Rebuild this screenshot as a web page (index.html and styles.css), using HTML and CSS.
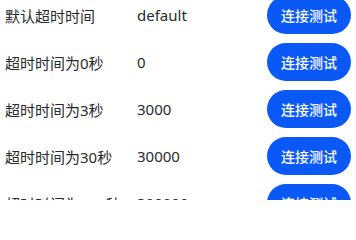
FILE: index.html
```html
<!DOCTYPE html>
<html lang="zh">
<head>
<meta charset="utf-8">
<link rel="stylesheet" href="styles.css">
</head>
<body>
<div class="list">
  <div class="row"><span class="label">默认超时时间</span><span class="value">default</span><button class="btn">连接测试</button></div>
  <div class="row"><span class="label">超时时间为0秒</span><span class="value">0</span><button class="btn">连接测试</button></div>
  <div class="row"><span class="label">超时时间为3秒</span><span class="value">3000</span><button class="btn">连接测试</button></div>
  <div class="row"><span class="label">超时时间为30秒</span><span class="value">30000</span><button class="btn">连接测试</button></div>
  <div class="row"><span class="label">超时时间为300秒</span><span class="value">300000</span><button class="btn">连接测试</button></div>
</div>
</body>
</html>
```
FILE: styles.css
```css
html, body {
  margin: 0;
  padding: 0;
  background: #ffffff;
}
html {
  height: 200px;
  overflow: hidden;
}
body {
  width: 356px;
  height: 200px;
  overflow: hidden;
  font-family: "Noto Sans", "Noto Sans CJK SC", sans-serif;
}
.list {
  display: flex;
  flex-direction: column;
  gap: 9px;
  margin-top: -4px;
  padding: 0 5px;
}
.row {
  display: flex;
  align-items: center;
  height: 38px;
}
.label {
  width: 132px;
  font-size: 15px;
  color: #2a2a2a;
  white-space: nowrap;
}
.value {
  flex: 1;
  font-size: 15px;
  color: #2a2a2a;
  white-space: nowrap;
}
.btn {
  width: 84px;
  height: 38px;
  border: none;
  border-radius: 19px;
  background: #0a59f7;
  color: #ffffff;
  font-family: "Noto Sans CJK SC", sans-serif;
  font-size: 14px;
  font-weight: 500;
  padding: 0;
  flex: none;
}
```
